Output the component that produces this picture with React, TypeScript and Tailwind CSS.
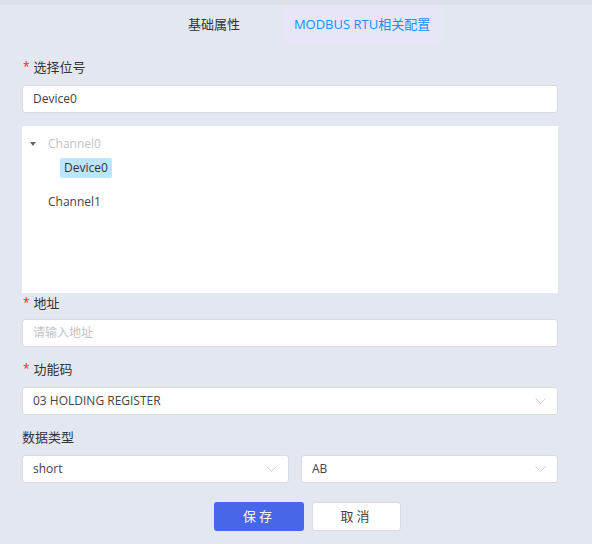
import React from 'react';

const font = { fontFamily: '"Open Sans", "Noto Sans CJK SC", sans-serif' };

const Chevron = () => (
    <svg width="11" height="6" viewBox="0 0 11 6" fill="none" className="shrink-0">
        <path d="M0.5 0.5 L5.5 5.2 L10.5 0.5" stroke="#c8ccd4" strokeWidth="1" />
    </svg>
);

const Label: React.FC<{ text: string; required?: boolean }> = ({ text, required }) => (
    <div className="flex items-center h-5 text-[13px] leading-5 text-[#333]">
        {required && <span className="text-[#f5222d] text-[12px] mr-[4px] ml-px">*</span>}
        <span>{text}</span>
    </div>
);

const Select: React.FC<{ value: string; className?: string }> = ({ value, className = '' }) => (
    <div className={`flex items-center justify-between h-[28px] bg-white border border-[#d9dbe0] rounded-[3px] pl-[10px] pr-[11px] text-[12px] text-[#444] ${className}`}>
        <span>{value}</span>
        <Chevron />
    </div>
);

export default function App() {
    return (
        <div className="w-[592px] h-[544px] bg-[#e3e7f0] overflow-hidden" style={font}>
            {/* 顶部条 */}
            <div className="h-[5px] bg-[#dce0eb]" />

            {/* 标签页 */}
            <div className="flex h-[39px] items-center text-[13px] whitespace-nowrap">
                <div className="ml-[188px] text-[#333]">基础属性</div>
                <div className="ml-[42px] h-full flex items-center justify-center w-[160px] bg-[#e6e6f7] text-[#1890ff]">
                    MODBUS RTU相关配置
                </div>
            </div>

            <div className="pl-[22px] w-[558px] pt-[13px]">
                <Label text="选择位号" required />
                <div className="mt-2 h-[28px] flex items-center bg-white border border-[#d9dbe0] rounded-[3px] px-[10px] text-[12px] text-[#444]">
                    Device0
                </div>

                {/* 位号树 */}
                <div className="mt-[13px] h-[167px] bg-white pt-[6px] text-[12px]">
                    <div className="flex items-center h-6">
                        <svg width="6" height="4" viewBox="0 0 6 4" className="ml-[8px] mr-[12px]">
                            <path d="M0 0 H6 L3 4 Z" fill="#666" />
                        </svg>
                        <span className="text-[#c0c4cc]">Channel0</span>
                    </div>
                    <div className="flex items-center h-6 pl-[38px]">
                        <span className="bg-[#bae7ff] text-[#333] px-[4px] h-5 leading-5 rounded-[2px]">Device0</span>
                    </div>
                    <div className="flex items-center h-6 mt-[10px] pl-[26px] text-[#444]">Channel1</div>
                </div>

                <Label text="地址" required />
                <div className="mt-[6px] h-[28px] flex items-center bg-white border border-[#d9dbe0] rounded-[3px] px-[10px] text-[12px] text-[#c0c4cc]">
                    请输入地址
                </div>

                <div className="mt-3">
                    <Label text="功能码" required />
                </div>
                <Select value="03 HOLDING REGISTER" className="mt-2" />

                <div className="mt-3">
                    <Label text="数据类型" />
                </div>
                <div className="mt-2 flex gap-3">
                    <Select value="short" className="w-[267px]" />
                    <Select value="AB" className="flex-1" />
                </div>

                <div className="mt-[19px] flex gap-2 ml-[192px]">
                    <button className="w-[90px] h-[29px] bg-[#4766e8] text-white text-[13px] rounded-[3px] tracking-[3px]">
                        保存
                    </button>
                    <button className="w-[89px] h-[29px] bg-white border border-[#d9dbe0] text-[#444] text-[13px] rounded-[3px] tracking-[3px]">
                        取消
                    </button>
                </div>
            </div>
        </div>
    );
}
